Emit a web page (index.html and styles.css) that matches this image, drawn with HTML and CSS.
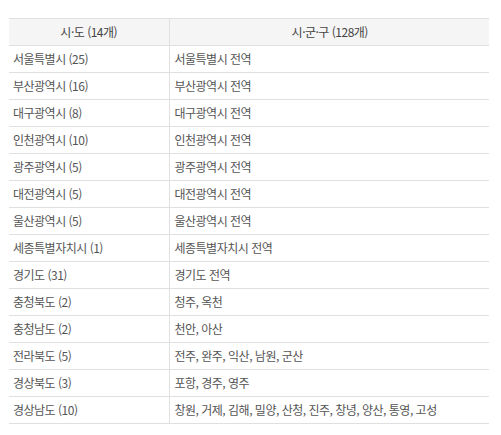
FILE: index.html
```html
<!DOCTYPE html>
<html lang="ko">
<head>
<meta charset="utf-8">
<link rel="stylesheet" href="styles.css">
</head>
<body>
<table class="region-table">
  <colgroup><col class="col-a"><col class="col-b"></colgroup>
  <thead>
    <tr><th>시·도 (14개)</th><th>시·군·구 (128개)</th></tr>
  </thead>
  <tbody>
    <tr><td>서울특별시 (25)</td><td>서울특별시 전역</td></tr>
    <tr><td>부산광역시 (16)</td><td>부산광역시 전역</td></tr>
    <tr><td>대구광역시 (8)</td><td>대구광역시 전역</td></tr>
    <tr><td>인천광역시 (10)</td><td>인천광역시 전역</td></tr>
    <tr><td>광주광역시 (5)</td><td>광주광역시 전역</td></tr>
    <tr><td>대전광역시 (5)</td><td>대전광역시 전역</td></tr>
    <tr><td>울산광역시 (5)</td><td>울산광역시 전역</td></tr>
    <tr><td>세종특별자치시 (1)</td><td>세종특별자치시 전역</td></tr>
    <tr><td>경기도 (31)</td><td>경기도 전역</td></tr>
    <tr><td>충청북도 (2)</td><td>청주, 옥천</td></tr>
    <tr><td>충청남도 (2)</td><td>천안, 아산</td></tr>
    <tr><td>전라북도 (5)</td><td>전주, 완주, 익산, 남원, 군산</td></tr>
    <tr><td>경상북도 (3)</td><td>포항, 경주, 영주</td></tr>
    <tr><td>경상남도 (10)</td><td>창원, 거제, 김해, 밀양, 산청, 진주, 창녕, 양산, 통영, 고성</td></tr>
  </tbody>
</table>
</body>
</html>
```
FILE: styles.css
```css
html, body { background: #fff; }
body { margin: 0; padding: 18px 0 0 9px; }
.region-table {
  border-collapse: collapse;
  width: 480px;
  table-layout: fixed;
  font-family: "Noto Sans CJK KR", "Noto Sans", sans-serif;
  font-size: 12px;
  letter-spacing: -0.5px;
  color: #555;
}
.col-a { width: 160px; }
.col-b { width: 320px; }
.region-table th,
.region-table td {
  height: 26px;
  padding: 0 4px;
  border-top: 1px solid #e0e0e0;
  border-bottom: 1px solid #e0e0e0;
  line-height: 16px;
  vertical-align: middle;
  white-space: nowrap;
}
.region-table th {
  background: #f5f5f5;
  font-weight: normal;
  text-align: center;
  color: #444;
}
.region-table td { text-align: left; }
.region-table th + th,
.region-table td + td { border-left: 1px solid #e0e0e0; padding-left: 5px; }
```
